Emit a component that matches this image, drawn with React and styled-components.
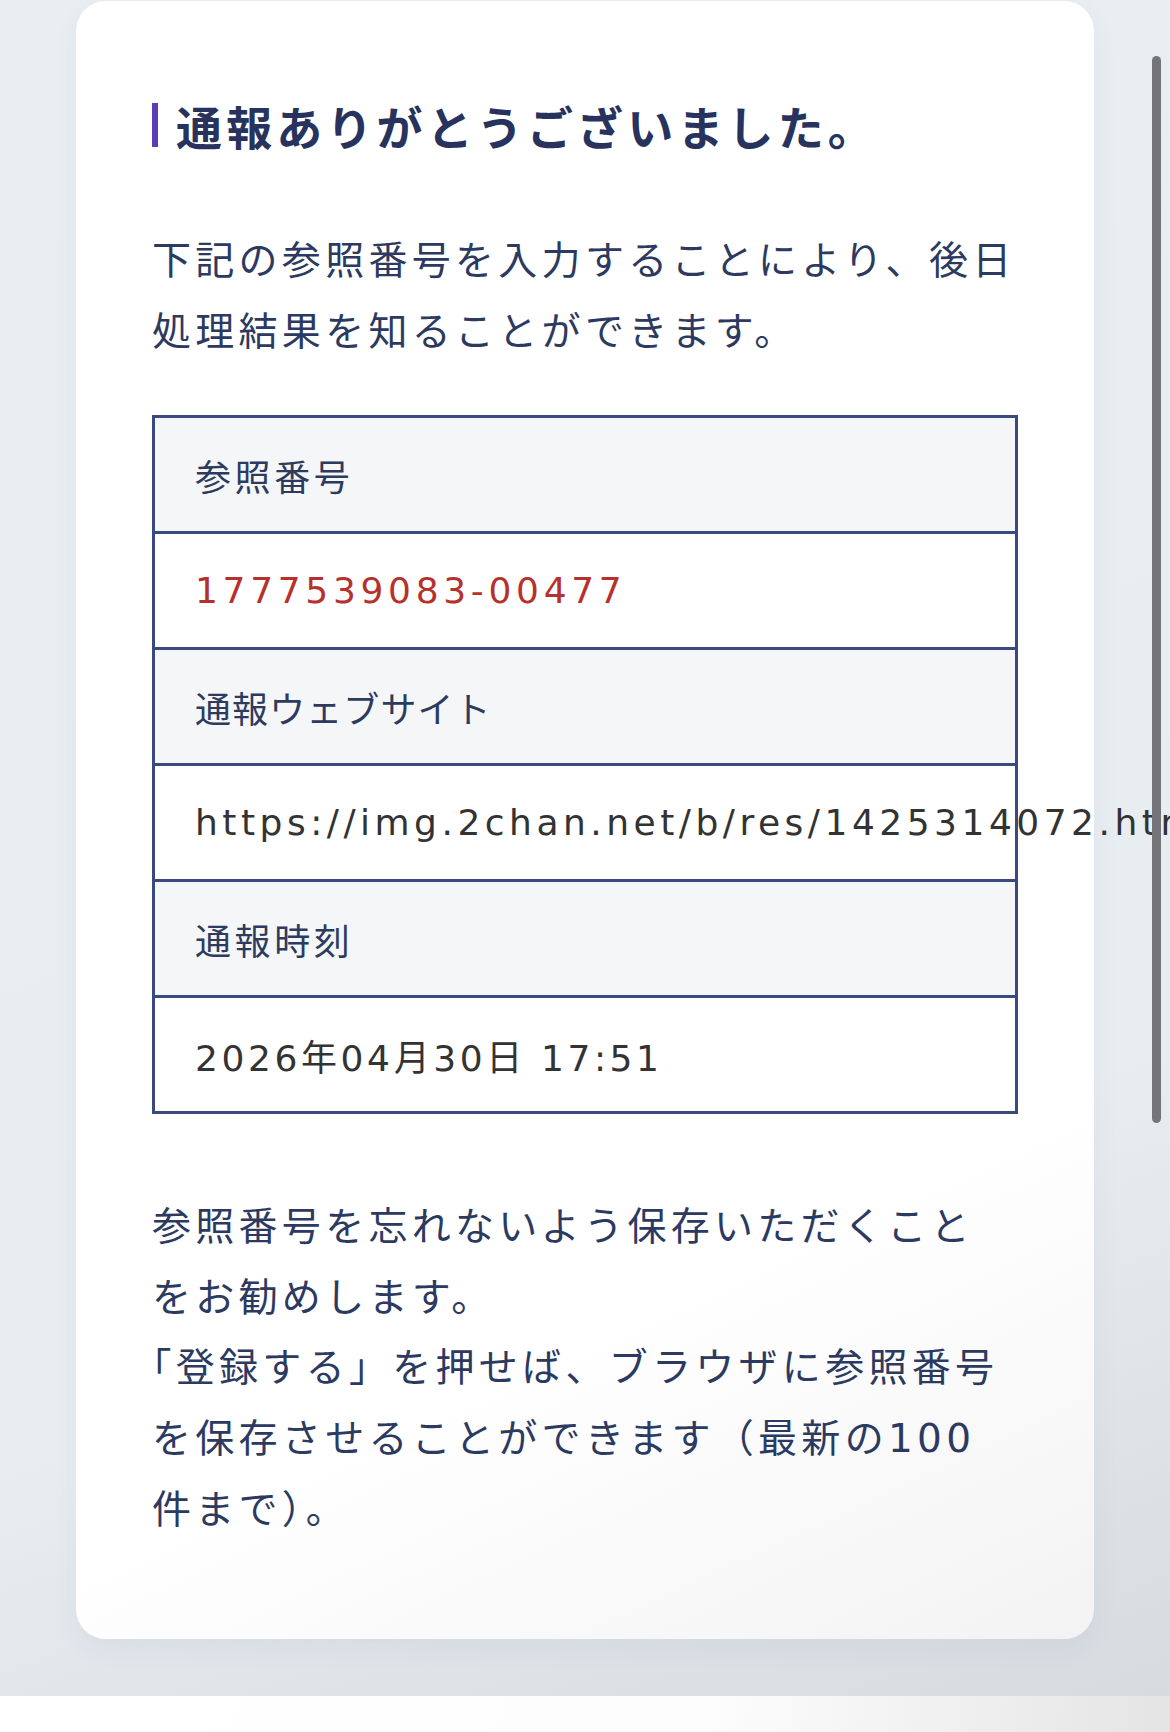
import styled, { createGlobalStyle } from 'styled-components'

const GlobalStyle = createGlobalStyle`
  html, body {
    margin: 0;
    padding: 0;
    overflow: hidden;
  }
  body {
    font-family: "Noto Sans CJK JP", sans-serif;
    -webkit-font-smoothing: antialiased;
  }
`

const Page = styled.div`
  position: relative;
  height: 1732px;
  display: flex;
  flex-direction: column;
  background: linear-gradient(160deg, #e9eef3 0%, #e8edf2 68%, #d6dadf 100%);
`

const Main = styled.main`
  flex: 0 0 1696px;
  box-sizing: border-box;
  padding: 1px 76px 0;
`

const Card = styled.section`
  background: linear-gradient(155deg, #ffffff 0%, #ffffff 74%, #f3f3f3 100%);
  border-radius: 30px;
  padding: 102px 76px 94px;
  box-shadow: 0 10px 28px rgba(40, 60, 90, 0.05);
`

const Heading = styled.h2`
  margin: 0;
  font-size: 46px;
  line-height: 44px;
  font-weight: 700;
  letter-spacing: 0.09em;
  color: #27335c;
  border-left: 6px solid #5a3db5;
  padding-left: 18px;
  white-space: nowrap;
`

const Para = styled.p`
  margin: ${(p) => p.$top}px 0 0;
  font-size: 39px;
  line-height: 70.6px;
  letter-spacing: 0.11em;
  color: #2c3a61;
  white-space: nowrap;
  text-spacing-trim: trim-start;
  font-family: "DejaVu Sans", "Noto Sans CJK JP", sans-serif;
`

const Table = styled.dl`
  margin: 48px 0 0;
  border: 3px solid #3a4a80;
`

const Cell = styled.div`
  height: 113px;
  display: flex;
  align-items: center;
  padding: 0 40px;
  font-size: 36px;
  letter-spacing: ${(p) => p.$spacing || '0.1em'};
  white-space: nowrap;
  background: ${(p) => (p.$label ? '#f5f6f8' : '#ffffff')};
  color: ${(p) => p.$color || (p.$label ? '#2d3b5e' : '#333333')};
  font-family: "DejaVu Sans", "Noto Sans CJK JP", sans-serif;
  & + & {
    border-top: 3px solid #3a4a80;
  }
`

const Label = styled(Cell).attrs({ as: 'dt' })``
const Value = styled(Cell).attrs({ as: 'dd' })`
  margin: 0;
`

const Footer = styled.footer`
  flex: 1;
  background: linear-gradient(100deg, #ffffff 0%, #fdfdfd 60%, #e4e4e4 100%);
`

const ScrollThumb = styled.div`
  position: absolute;
  left: 1152px;
  top: 56px;
  width: 9px;
  height: 1067px;
  border-radius: 5px;
  background: #747579;
`

const rows = [
  { label: '参照番号', value: '1777539083-00477', color: '#b7312c', spacing: '0.13em' },
  {
    label: '通報ウェブサイト',
    labelSpacing: '0.03em',
    value: 'https://img.2chan.net/b/res/1425314072.html',
    spacing: '0.125em',
  },
  { label: '通報時刻', value: '2026年04月30日 17:51' },
]

export default function App() {
  return (
    <>
      <GlobalStyle />
      <Page>
        <Main>
          <Card>
            <Heading>通報ありがとうございました。</Heading>
            <Para $top={79}>
              下記の参照番号を入力することにより、後日
              <br />
              処理結果を知ることができます。
            </Para>
            <Table>
              {rows.map((row) => [
                <Label key={row.label + '-l'} $label $spacing={row.labelSpacing}>
                  {row.label}
                </Label>,
                <Value key={row.label + '-v'} $color={row.color} $spacing={row.spacing}>
                  {row.value}
                </Value>,
              ])}
            </Table>
            <Para $top={78}>
              参照番号を忘れないよう保存いただくこと
              <br />
              をお勧めします。
              <br />
              「登録する」を押せば、ブラウザに参照番号
              <br />
              を保存させることができます（最新の100
              <br />
              件まで）。
            </Para>
          </Card>
        </Main>
        <Footer />
        <ScrollThumb />
      </Page>
    </>
  )
}
